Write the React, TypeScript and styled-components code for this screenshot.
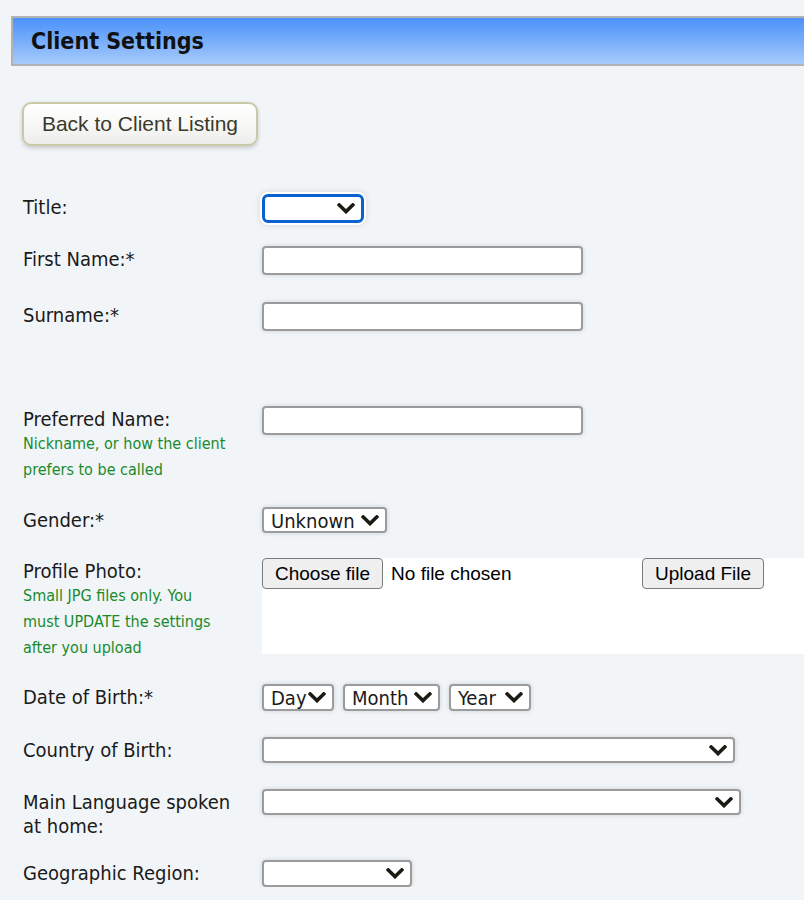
import React from "react";
import styled, { createGlobalStyle } from "styled-components";

const GlobalStyle = createGlobalStyle`
  html, body {
    margin: 0;
    padding: 0;
    background: #f2f5f8;
    overflow-x: hidden;
  }
  body {
    font-family: "DejaVu Sans Condensed", "DejaVu Sans", sans-serif;
    font-stretch: condensed;
    color: #1a1a1a;
  }
`;

const Page = styled.div`
  padding-top: 16px;
`;

const Header = styled.div`
  margin-left: 11px;
  margin-right: -20px;
  height: 46px;
  border: 2px solid #b3b3b3;
  border-right: none;
  background: linear-gradient(to bottom, #4a92f8 0%, #7cb0fa 55%, #a7cbfc 100%);
  padding-left: 18px;
  display: flex;
  align-items: center;
`;

const Title = styled.h1`
  margin: 0;
  font-size: 23px;
  font-weight: bold;
  color: #111;
  line-height: 46px;
`;

const Content = styled.div`
  padding-left: 22px;
`;

const BackButton = styled.button`
  margin-top: 36px;
  width: 236px;
  height: 44px;
  border: 2px solid #c9c9a8;
  border-radius: 9px;
  background: linear-gradient(to bottom, #ffffff 0%, #f6f6f4 60%, #ececea 100%);
  box-shadow: 0 2px 4px rgba(0, 0, 0, 0.18);
  font-family: "Liberation Sans", Arial, sans-serif;
  font-stretch: normal;
  font-size: 21px;
  color: #3a3a2c;
  padding: 0;
  cursor: pointer;
`;

const Form = styled.div`
  margin-top: 48px;
`;

const Row = styled.div<{ $after?: number }>`
  display: grid;
  grid-template-columns: 240px 1fr;
  align-items: start;
  margin-bottom: ${(p) => p.$after ?? 0}px;
`;

const LabelCell = styled.div`
  padding-top: 1px;
  padding-left: 1px;
`;

const Label = styled.label`
  display: block;
  font-size: 20px;
  line-height: 24px;
  color: #1a1a1a;
`;

const Help = styled.div`
  font-size: 16px;
  line-height: 26px;
  color: #198a2c;
`;

const TextInput = styled.input`
  box-sizing: border-box;
  width: 321px;
  height: 29px;
  border: 2px solid #9b9b9b;
  border-radius: 4px;
  background: #fff;
  box-shadow: 0 0 5px rgba(0, 0, 0, 0.14);
  outline: none;
  display: block;
  margin: 0;
`;

const SelectBox = styled.div<{ $w: number; $h: number; $focus?: boolean }>`
  box-sizing: border-box;
  width: ${(p) => p.$w}px;
  height: ${(p) => p.$h}px;
  display: flex;
  align-items: center;
  background: #fff;
  border: ${(p) => (p.$focus ? "3px solid #0a62d2" : "2px solid #9b9b9b")};
  border-radius: ${(p) => (p.$focus ? 6 : 4)}px;
  box-shadow: ${(p) =>
    p.$focus
      ? "0 0 0 2px #ffffff, 0 0 6px 2px rgba(0,0,0,0.12)"
      : "0 0 5px rgba(0,0,0,0.14)"};
  padding: 0 6px 0 7px;
  font-size: 20px;
  color: #1a1a1a;
  white-space: nowrap;
  cursor: default;
`;

const SelectText = styled.span`
  line-height: 1;
  margin-top: 1px;
`;

const Chevron = styled.svg`
  margin-left: auto;
  flex: none;
`;

const DateGroup = styled.div`
  display: flex;
  gap: 9px;
`;

const FileArea = styled.div`
  background: #fff;
  height: 96px;
  display: flex;
  align-items: flex-start;
`;

const FilePicker = styled.div`
  width: 380px;
  display: flex;
  align-items: center;
`;

const NativeButton = styled.button`
  box-sizing: border-box;
  height: 31px;
  padding: 0 12px;
  border: 1px solid #7a7a7a;
  border-radius: 4px;
  background: #efefef;
  font-family: "Liberation Sans", Arial, sans-serif;
  font-stretch: normal;
  font-size: 19px;
  color: #000;
  cursor: pointer;
`;

const FileStatus = styled.span`
  margin-left: 8px;
  font-family: "Liberation Sans", Arial, sans-serif;
  font-stretch: normal;
  font-size: 19px;
  color: #000;
`;

const ChevronIcon = () => (
  <Chevron width="18" height="11" viewBox="0 0 18 11">
    <polyline
      points="2.2,2 9,8.6 15.8,2"
      fill="none"
      stroke="#1c1c14"
      strokeWidth="3.6"
      strokeLinecap="square"
      strokeLinejoin="miter"
    />
  </Chevron>
);

const Select = ({
  w,
  h,
  text,
  focus,
}: {
  w: number;
  h: number;
  text?: string;
  focus?: boolean;
}) => (
  <SelectBox $w={w} $h={h} $focus={focus} role="combobox">
    {text && <SelectText>{text}</SelectText>}
    <ChevronIcon />
  </SelectBox>
);

export default function App() {
  return (
    <Page>
      <GlobalStyle />
      <Header>
        <Title>Client Settings</Title>
      </Header>
      <Content>
        <BackButton>Back to Client Listing</BackButton>
        <Form>
          <Row $after={23}>
            <LabelCell>
              <Label>Title:</Label>
            </LabelCell>
            <Select w={102} h={29} focus />
          </Row>
          <Row $after={27}>
            <LabelCell>
              <Label>First Name:*</Label>
            </LabelCell>
            <TextInput />
          </Row>
          <Row $after={75}>
            <LabelCell>
              <Label>Surname:*</Label>
            </LabelCell>
            <TextInput />
          </Row>
          <Row $after={24}>
            <LabelCell>
              <Label>Preferred Name:</Label>
              <Help>
                Nickname, or how the client
                <br />
                prefers to be called
              </Help>
            </LabelCell>
            <TextInput />
          </Row>
          <Row $after={25}>
            <LabelCell>
              <Label>Gender:*</Label>
            </LabelCell>
            <Select w={125} h={26} text="Unknown" />
          </Row>
          <Row $after={23}>
            <LabelCell>
              <Label>Profile Photo:</Label>
              <Help>
                Small JPG files only. You
                <br />
                must UPDATE the settings
                <br />
                after you upload
              </Help>
            </LabelCell>
            <FileArea>
              <FilePicker>
                <NativeButton>Choose file</NativeButton>
                <FileStatus>No file chosen</FileStatus>
              </FilePicker>
              <NativeButton>Upload File</NativeButton>
            </FileArea>
          </Row>
          <Row $after={26}>
            <LabelCell>
              <Label>Date of Birth:*</Label>
            </LabelCell>
            <DateGroup>
              <Select w={72} h={27} text="Day" />
              <Select w={97} h={27} text="Month" />
              <Select w={82} h={27} text="Year" />
            </DateGroup>
          </Row>
          <Row $after={26}>
            <LabelCell>
              <Label>Country of Birth:</Label>
            </LabelCell>
            <Select w={473} h={26} />
          </Row>
          <Row $after={22}>
            <LabelCell>
              <Label>
                Main Language spoken
                <br />
                at home:
              </Label>
            </LabelCell>
            <Select w={479} h={26} />
          </Row>
          <Row>
            <LabelCell>
              <Label>Geographic Region:</Label>
            </LabelCell>
            <Select w={150} h={27} />
          </Row>
        </Form>
      </Content>
    </Page>
  );
}
